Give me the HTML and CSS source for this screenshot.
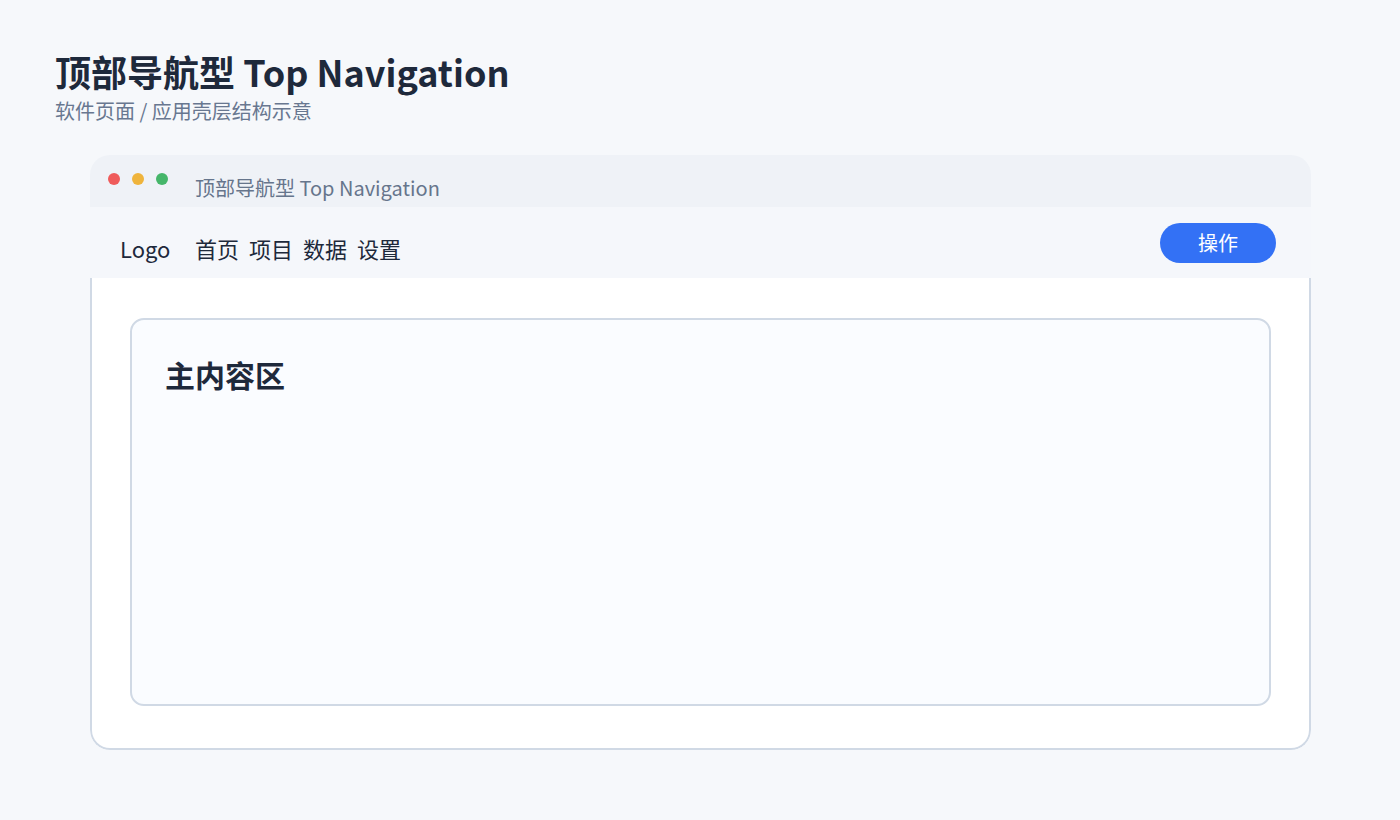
FILE: index.html
```html
<!DOCTYPE html>
<html lang="zh-CN">
<head>
<meta charset="utf-8">
<title>顶部导航型 Top Navigation</title>
<link rel="stylesheet" href="styles.css">
</head>
<body>
  <header class="page-head">
    <h1 class="page-title">顶部导航型 Top Navigation</h1>
    <p class="page-sub">软件页面 / 应用壳层结构示意</p>
  </header>

  <div class="window">
    <div class="titlebar">
      <span class="dot dot-red"></span>
      <span class="dot dot-yellow"></span>
      <span class="dot dot-green"></span>
      <span class="win-title">顶部导航型 Top Navigation</span>
    </div>
    <nav class="topnav">
      <span class="logo">Logo</span>
      <ul class="nav-links">
        <li>首页</li>
        <li>项目</li>
        <li>数据</li>
        <li>设置</li>
      </ul>
      <button class="action">操作</button>
    </nav>
    <main class="win-body">
      <section class="content">
        <h2 class="content-title">主内容区</h2>
      </section>
    </main>
  </div>
</body>
</html>
```

FILE: styles.css
```css
* {
  box-sizing: border-box;
}

body {
  margin: 0;
  width: 1400px;
  height: 820px;
  background: #f6f8fb;
  font-family: "Noto Sans CJK SC", "Noto Sans", sans-serif;
  color: #1e293b;
}

.page-head {
  padding: 48px 0 0 55px;
}

.page-title {
  margin: 0;
  font-size: 36px;
  font-weight: 700;
  line-height: 46px;
  color: #1e293b;
}

.page-sub {
  margin: 5px 0 0 0;
  font-size: 20px;
  line-height: 24px;
  color: #687790;
}

.window {
  margin: 32px 0 0 90px;
  width: 1221px;
  border-radius: 20px;
  overflow: hidden;
}

.titlebar {
  height: 52px;
  background: #eff2f7;
  display: flex;
  align-items: center;
  padding-left: 105px;
  position: relative;
}

.dot {
  position: absolute;
  top: 18px;
  width: 12px;
  height: 12px;
  border-radius: 50%;
}

.dot-red { left: 18px; background: #ef5b5b; }
.dot-yellow { left: 42px; background: #efb43c; }
.dot-green { left: 66px; background: #45b66a; }

.win-title {
  margin-top: 12px;
  font-size: 20px;
  color: #66758c;
}

.topnav {
  height: 71px;
  background: #f5f7fb;
  display: flex;
  align-items: center;
  padding: 0 35px 0 30px;
}

.logo {
  font-size: 22px;
  margin-top: 10px;
  color: #1e293b;
  width: 75px;
}

.nav-links {
  list-style: none;
  margin: 10px 0 0 0;
  padding: 0;
  display: flex;
  gap: 10px;
  font-size: 22px;
  color: #1e293b;
}

.action {
  margin-left: auto;
  width: 116px;
  height: 40px;
  border: none;
  border-radius: 20px;
  background: #3371f5;
  color: #ffffff;
  font-family: inherit;
  font-size: 20px;
  padding: 0;
}

.win-body {
  background: #ffffff;
  border: 2px solid #d0d9e5;
  border-top: none;
  border-radius: 0 0 20px 20px;
  height: 472px;
  padding: 40px 38px 0 38px;
}

.content {
  height: 388px;
  background: #fafcff;
  border: 2px solid #d0d9e5;
  border-radius: 14px;
  padding: 34px 0 0 33px;
}

.content-title {
  margin: 0;
  font-size: 30px;
  font-weight: 700;
  line-height: 40px;
  color: #1e293b;
}
```
